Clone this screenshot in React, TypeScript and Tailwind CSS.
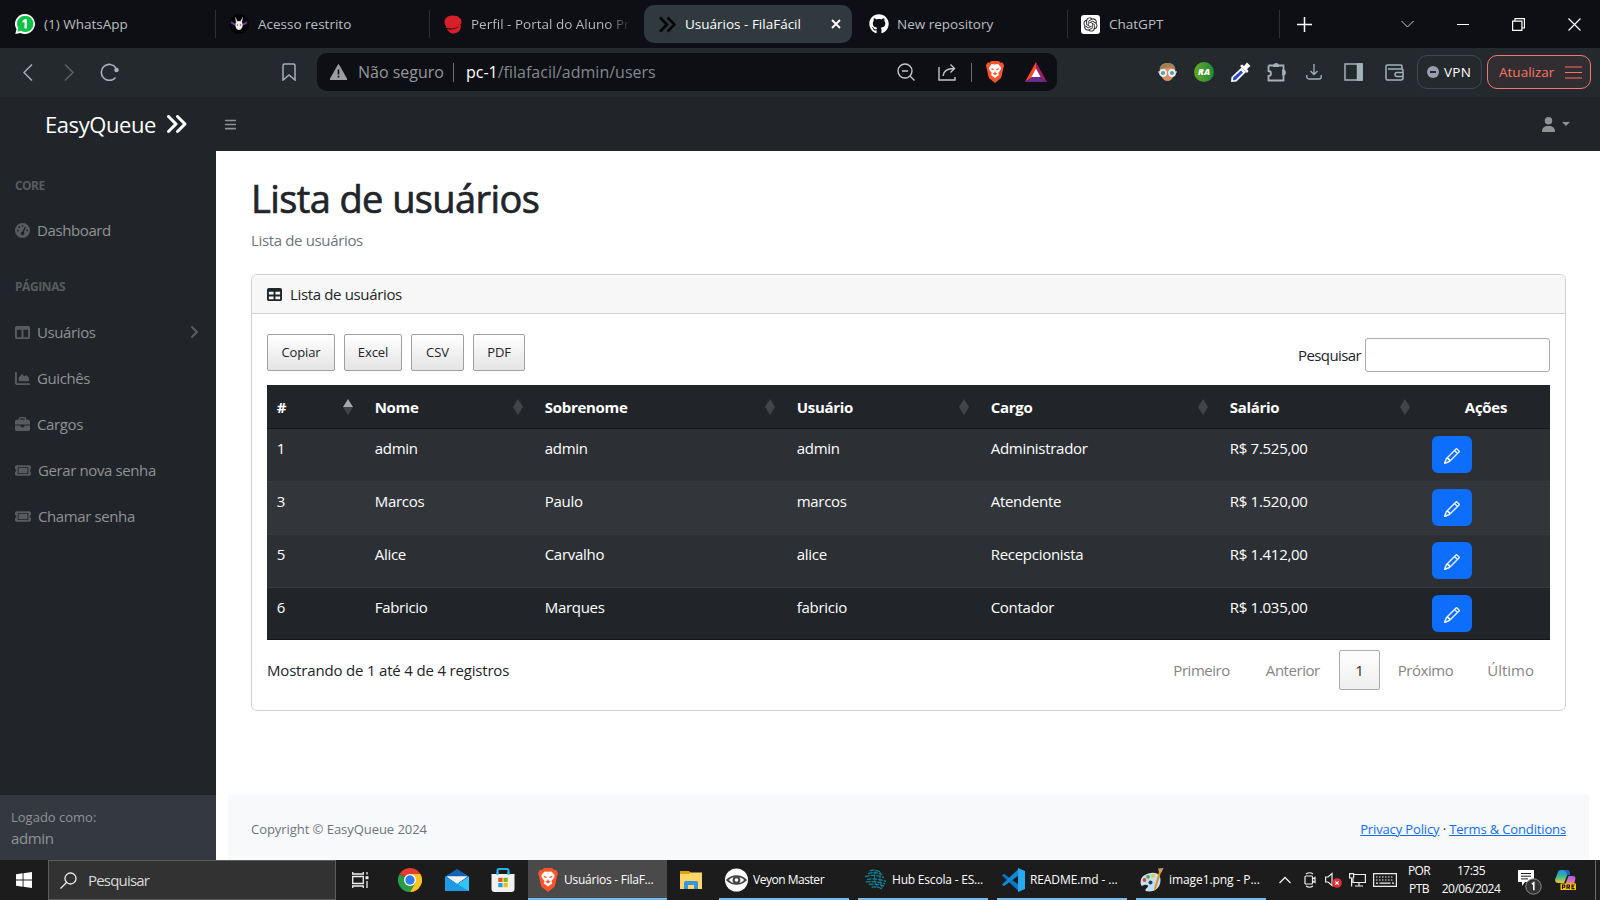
import React, { ReactNode } from 'react';
import {
  FaAngleRight, FaAnglesRight, FaBars, FaBriefcase, FaChartArea, FaGaugeHigh,
  FaGithub, FaTable, FaTableColumns, FaTicket, FaUser,
} from 'react-icons/fa6';
import { BsPencil } from 'react-icons/bs';
import { RiOpenaiFill } from 'react-icons/ri';

/* ---------- Logos ---------- */

function BraveLogo({ className }: { className: string }) {
  return (
    <svg viewBox="0 0 20 24" className={className}>
      <path d="M6 0h8l2 2 2-.3L20 5l-.9 3L17 17.500 Q16.500 19 15 20l-5 4-5-4Q3.500 19 3 17.500L.9 8 0 5l2-3.300L4 2z" fill="#fb542b" />
      <path d="M10 3.800 13.500 3.400 16.600 7l-.4 2.500-2.700 3.500 .8 2.200L10 18.500 5.700 15.200l.8-2.200L3.800 9.500 3.400 7 6.500 3.400z" fill="#fff" />
      <path d="M5.200 7.800 8.300 8.400 8.700 10 6.400 9.500zM14.800 7.800 11.700 8.400 11.300 10 13.600 9.500zM10 10.800 11 13 12.800 13.600 10 15.600 7.200 13.600 9 13z" fill="#fb542b" />
    </svg>
  );
}

function WhatsAppLogo() {
  return (
    <svg viewBox="0 0 20 20" className="size-5">
      <path d="M10 0a10 10 0 1 1-4.600 18.900L.3 20l1.200-4.800A10 10 0 0 1 10 0z" fill="#fff" />
      <circle cx="10.200" cy="9.900" r="8.200" fill="#0fc144" />
      <path d="M2.500 17.800 3.400 14l2.800 2.800z" fill="#0fc144" />
      <path d="M7.500 6.800 10.300 5h1.500v9.500H9.500V7.800l-2 1z" fill="#fff" />
    </svg>
  );
}

function RabbitLogo() {
  return (
    <svg viewBox="0 0 20 20" className="size-5">
      <circle cx="10" cy="10" r="10" fill="#000" />
      <path d="M1.500 7 6 9.500v2L2.500 10zM18.500 7 14 9.500v2L17.500 10z" fill="#7e30a8" />
      <path d="M6 2.500 8.800 7.500 7 9zM14 2.500 11.200 7.500 13 9z" fill="#e6c9d8" />
      <path d="M10 7c2.400 0 3.700 1.500 3.700 3.800S12.300 16 10 16s-3.700-2.900-3.700-5.200S7.600 7 10 7z" fill="#f0edf0" />
      <circle cx="8.500" cy="11" r=".7" fill="#555" />
      <circle cx="11.500" cy="11" r=".7" fill="#555" />
    </svg>
  );
}

function PortalLogo() {
  return (
    <svg viewBox="0 0 18 19" className="h-[19px] w-[18px]">
      <path d="M9 .5c5 0 8.500 3 8.500 6.300 0 3.200-3.500 5.700-8 5.700C4.500 12.500.5 11.500.5 7S4.500.5 9 .5z" fill="#d71f28" />
      <path d="M3 14c4 1 10.500.5 13.500-4.500 1.500 5-2.500 9-7 9-3 0-5.500-2-6.500-4.500z" fill="#d71f28" />
      <path d="M2 11.500c4 1.700 10 1.500 14-2" fill="none" stroke="#d71f28" strokeWidth="2" />
    </svg>
  );
}

function ChromeLogo() {
  return (
    <svg viewBox="0 0 24 24" className="size-6">
      <path d="M12 12 1.600 6A12 12 0 0 1 22.400 6z" fill="#e33b2e" />
      <path d="M12 12h0L1.600 6A12 12 0 0 0 12 24l5-9z" fill="#2a9d47" />
      <path d="M12 6h10.400A12 12 0 0 1 12 24l5.200-9z" fill="#fcc31e" />
      <circle cx="12" cy="12" r="6" fill="#fff" />
      <circle cx="12" cy="12" r="4.700" fill="#2f7de9" />
    </svg>
  );
}

function MailLogo() {
  return (
    <svg viewBox="0 0 24 24" className="size-6">
      <path d="M0 8.500 12 1l12 7.500V12H0z" fill="#1265b4" />
      <path d="M2 8.500h20L12 16z" fill="#f2f2f2" />
      <path d="M0 8.500 12 16 24 8.500V23H0z" fill="#35c2f5" />
      <path d="M0 8.500 24 23H0z" fill="#1e9be6" />
      <path d="M1.500 8.500h21L12 15.500z" fill="#f2f2f2" />
    </svg>
  );
}

function StoreLogo() {
  return (
    <svg viewBox="0 0 24 24" className="size-6">
      <path d="M6.500 7V2.500A1.500 1.500 0 0 1 8 1h8a1.500 1.500 0 0 1 1.500 1.500V7" fill="none" stroke="#24b3ee" strokeWidth="2" />
      <path d="M.5 6h23v15a3 3 0 0 1-3 3h-17a3 3 0 0 1-3-3z" fill="#f1f1f1" />
      <path d="M6.500 4v3M17.500 4v3" stroke="#24b3ee" strokeWidth="2" />
      <path d="M7.300 9.800h4.200V14H7.300z" fill="#f04e23" />
      <path d="M12.500 9.800h4.200V14h-4.200z" fill="#80b900" />
      <path d="M7.300 15h4.200v4.200H7.300z" fill="#1ba0ee" />
      <path d="M12.500 15h4.200v4.200h-4.200z" fill="#ffb800" />
    </svg>
  );
}

function FolderLogo() {
  return (
    <svg viewBox="0 0 22 18" className="h-[18px] w-[22px]">
      <path d="M0 0h9l2 2h10v4H0z" fill="#e3a008" />
      <path d="M0 3h9l1.500-1.500H22V18H0z" fill="#ffd667" />
      <path d="M4 18v-6.500a1.500 1.500 0 0 1 1.500-1.500h11a1.500 1.500 0 0 1 1.500 1.500V18h-4v-4H8v4z" fill="#3a94dc" />
    </svg>
  );
}

function VeyonLogo() {
  return (
    <svg viewBox="0 0 24 24" className="h-[24px] w-[23px]">
      <circle cx="12" cy="12" r="12" fill="#fff" />
      <path d="M1 12c5-6.500 17-6.500 22 0-5 6.500-17 6.500-22 0z" fill="#444" />
      <path d="M4 12c2-2 4-3 5-3-1.500 1.500-1.500 4.500 0 6-1 0-3-1-5-3zM20 12c-2-2-4-3-5-3 1.500 1.500 1.500 4.500 0 6 1 0 3-1 5-3z" fill="#fff" />
      <circle cx="12" cy="12" r="1.900" fill="#fff" />
    </svg>
  );
}

function HubLogo() {
  return (
    <svg viewBox="0 0 24 22" className="h-[21px] w-[23px]" fill="none" stroke="#11869c" strokeWidth="1.300">
      <path d="M6 2q5-2 11 1M4 5q7-3 15 1M1 8q9-3 20 1M3 11q9-2 20 2M2 13.500q10-1 20 2M5 16q8-1 16 2M8 19q6-1 11 2" strokeDasharray="5 1" />
      <path d="M12 2q-3 8 2 17M17 3q-2 9 2 17" strokeWidth=".8" />
    </svg>
  );
}

function VsCodeLogo() {
  return (
    <svg viewBox="0 0 24 24" className="size-6">
      <path d="M1 7.500 3 5.800 18 17v6.500z" fill="#0a78c2" />
      <path d="M1 16.500 3 18.200 18 7V.5z" fill="#1089d8" />
      <path d="M17 0 24 3v18l-7 3z" fill="#27a9f2" />
    </svg>
  );
}

function PaintLogo() {
  return (
    <svg viewBox="0 0 24 24" className="size-6">
      <path d="M11 5c6-1 10 2 9.500 8S16 23.500 9 23.500 7 20 8 18.500 5 16 3 17.500 0 15 1 11.500 6 5.800 11 5z" fill="#c3e0f2" />
      <circle cx="4.500" cy="12" r="1.900" fill="#e0492f" />
      <circle cx="8" cy="8.800" r="1.900" fill="#4cab3c" />
      <circle cx="13" cy="7.800" r="1.900" fill="#f3c02f" />
      <circle cx="10.500" cy="14.500" r="2" fill="#1d4464" />
      <path d="M19.500 2 21.500 3 16 20.500 14.500 23l-.3-3z" fill="#ea8d23" />
      <path d="M18 .5 23.500 0 21.500 4.500 19 4z" fill="#c99a63" />
    </svg>
  );
}

function CopilotLogo() {
  return (
    <svg viewBox="0 0 21 20" className="h-5 w-[21px]">
      <defs>
        <linearGradient id="cop-left" x1="0" y1="0" x2="0" y2="1">
          <stop offset="0" stopColor="#1e8fe8" />
          <stop offset=".5" stopColor="#35b98e" />
          <stop offset="1" stopColor="#e8c93a" />
        </linearGradient>
        <linearGradient id="cop-right" x1="0" y1="0" x2="0" y2="1">
          <stop offset="0" stopColor="#a65be6" />
          <stop offset="1" stopColor="#f58a7a" />
        </linearGradient>
      </defs>
      <path d="M5.500 0h7c1.500 0 2 1.500 2.500 4.500h-2.500L9 13H3.500C.5 13-.3 11 .3 9L3 2Q3.500 0 5.500 0z" fill="url(#cop-left)" />
      <path d="M9 0h3.500c1.500 0 2 1.500 2.500 4.500l-3 .5Q11.500 1.500 9 0z" fill="#2459cc" />
      <path d="M13.500 6H18q3 .3 2.300 3L19 15H10z" fill="url(#cop-right)" />
      <path d="M5.500 13.500H21V20H5.500z" fill="#ffc400" />
      <path d="M7.500 19v-4h2.200v2.200H7.500M12 19v-4h2.500v2H12M14.500 19l-1.300-2M19.500 15H17v3.600h2.500M17 16.800h2" fill="none" stroke="#111" strokeWidth="1.100" />
    </svg>
  );
}

/* ---------- Browser chrome ---------- */

function Tab({ width, icon, label, gap }: { width: string; icon: ReactNode; label: string; gap: string }) {
  return (
    <div className={`flex h-7 items-center border-r border-[#2c2f33] ${width}`}>
      <div className={`flex shrink-0 items-center ${gap}`}>
        {icon}
        <span className="pt-px text-[13.500px] whitespace-nowrap text-[#bcbec0]">{label}</span>
      </div>
    </div>
  );
}

function TabBar() {
  return (
    <div className="flex h-12 shrink-0 items-center bg-[#0e0f14]">
      <Tab width="w-[216px] pl-[15px]" gap="gap-[9px]" icon={<WhatsAppLogo />} label="(1) WhatsApp" />
      <Tab width="w-[214px] pl-[13px]" gap="gap-[9px]" icon={<RabbitLogo />} label="Acesso restrito" />
      <div className="flex h-7 w-[214px] items-center pl-[14px]">
        <PortalLogo />
        <span className="ml-[9px] w-[160px] overflow-hidden bg-linear-to-r from-[#bcbec0] from-85% to-transparent bg-clip-text pt-px text-[13.500px] whitespace-nowrap text-transparent">
          Perfil - Portal do Aluno Pr
        </span>
      </div>
      <div className="flex h-[38px] w-[208px] items-center rounded-[10px] bg-[#30393e] pl-[15px]">
        <svg viewBox="0 0 17 17" className="size-[17px]" fill="none" stroke="#050607" strokeWidth="2.600">
          <path d="M1 1.500 8 8.500 1 15.500M8.500 1.500l7 7-7 7" />
        </svg>
        <span className="ml-[9px] w-[118px] pt-px text-[13.500px] whitespace-nowrap text-white">Usuários - FilaFácil</span>
        <svg viewBox="0 0 10 10" className="ml-[28px] size-[10px]" stroke="#fff" strokeWidth="1.800">
          <path d="M1 1 9 9M9 1 1 9" />
        </svg>
      </div>
      <Tab width="w-[216px] pl-[17px]" gap="gap-[8px]" icon={<FaGithub className="size-5 text-white" />} label="New repository" />
      <Tab
        width="w-[212px] pl-[13px]"
        gap="gap-[9px]"
        icon={<span className="flex size-[19px] items-center justify-center rounded-[3px] bg-white"><RiOpenaiFill className="size-[17px] text-[#222]" /></span>}
        label="ChatGPT"
      />
      <svg viewBox="0 0 15 15" className="ml-[17px] size-[15px]" stroke="#fff" strokeWidth="1.500"><path d="M7.500 0v15M0 7.500h15" /></svg>
      <svg viewBox="0 0 13 8" className="ml-[89px] h-2 w-[13px]" fill="none" stroke="#ccc" strokeWidth="1"><path d="M.5 1 6.500 7l6-6" /></svg>
      <svg viewBox="0 0 12 12" className="ml-[43px] size-3" stroke="#fff" strokeWidth="1"><path d="M0 6.500h12" /></svg>
      <svg viewBox="0 0 13 13" className="ml-[43px] size-[13px]" fill="none" stroke="#fff" strokeWidth="1.200"><path d="M.6 3.100h9.300v9.300H.6zM3 3V.6h9.400V10H10" /></svg>
      <svg viewBox="0 0 13 13" className="ml-[43px] size-[13px]" stroke="#fff" strokeWidth="1.200"><path d="M.5.5l12 12M12.500.5l-12 12" /></svg>
    </div>
  );
}

function Toolbar() {
  const line = { fill: 'none', stroke: '#a3b2b8', strokeWidth: 1.5 };
  return (
    <div className="flex h-[49px] shrink-0 items-center bg-[#23292d] pb-px pl-[23px]">
      <svg viewBox="0 0 10 17" className="h-[17px] w-[10px]" {...line}><path d="M9 .5 1 8.500l8 8" /></svg>
      <svg viewBox="0 0 10 17" className="ml-[31px] h-[17px] w-[10px]" {...line} stroke="#5b6367"><path d="M1 .5l8 8-8 8" /></svg>
      <svg viewBox="0 0 20 18" className="ml-[26px] h-[18px] w-[20px]" {...line} strokeWidth="1.600">
        <path d="M15.500 14.500A8 8 0 1 1 16 5" />
        <circle cx="16.500" cy="7" r="2.300" fill="#a3b2b8" stroke="none" />
      </svg>
      <svg viewBox="0 0 14 18" className="ml-[162px] h-[18px] w-[14px]" {...line}><path d="M1 17V2.500A1.500 1.500 0 0 1 2.500 1h9A1.500 1.500 0 0 1 13 2.500V17l-6-5z" /></svg>
      <div className="ml-[21px] flex h-[38px] w-[740px] items-center rounded-[10px] bg-[#0e0f14] pl-[13px]">
        <svg viewBox="0 0 17 16" className="h-4 w-[17px]">
          <path d="M8.500.5 17 15.500H0z" fill="#9b9da0" stroke="#9b9da0" strokeLinejoin="round" />
          <path d="M8.500 5.500v5M8.500 11.800v1.700" stroke="#0e0f14" strokeWidth="1.600" />
        </svg>
        <span className="ml-[11px] text-[16px] whitespace-nowrap text-[#95989b]">Não seguro</span>
        <span className="ml-[9px] h-[19px] w-px bg-[#6a6c70]" />
        <span className="ml-[12px] text-[16px] whitespace-nowrap text-[#84878b]"><span className="text-white">pc-1</span>/filafacil/admin/users</span>
        <svg viewBox="0 0 18 18" className="ml-auto size-[18px]" fill="none" stroke="#c3c5c7" strokeWidth="1.400"><circle cx="8" cy="8" r="7" /><path d="M5 8h6M13 13l4.500 4.500" /></svg>
        <svg viewBox="0 0 18 18" className="ml-[23px] size-[18px]" fill="none" stroke="#c3c5c7" strokeWidth="1.400"><path d="M1 4v13h16v-3M5 13c.5-5 4-7.500 11-7.500M12.500 1.500l4 4-4 4" /></svg>
        <span className="ml-[15px] h-[19px] w-px bg-[#6a6c70]" />
        <BraveLogo className="ml-[13px] h-[22px] w-[20px]" />
        <svg viewBox="0 0 22 20" className="mr-[10px] ml-[20px] h-5 w-[22px]">
          <path d="M11 0 0 20l11-7z" fill="#ff4724" />
          <path d="M11 0l11 20-11-7z" fill="#9e1f63" />
          <path d="M0 20h22l-11-7z" fill="#662d91" />
          <path d="M11 6.500 15.500 15h-9z" fill="#fff" />
        </svg>
      </div>
      <svg viewBox="0 0 19 18" className="ml-[101px] h-[18px] w-[19px]">
        <path d="M2 7Q2 0 9.500 0T17 7l-1 5q-2 6-6.500 6T3 12z" fill="#d98f66" />
        <path d="M1.500 7Q2 0 9.500 0T17.500 7L13 4.500 7 5z" fill="#a08258" />
        <circle cx="5" cy="10" r="3" fill="#5f9aa5" stroke="#e8f2f4" strokeWidth="1.800" />
        <circle cx="14" cy="10" r="3" fill="#5f9aa5" stroke="#e8f2f4" strokeWidth="1.800" />
        <path d="M0 9h1.500M17.500 9H19" stroke="#e8f2f4" />
      </svg>
      <span className="ml-[17px] flex size-5 items-center justify-center rounded-full bg-linear-to-r from-[#63a818] to-[#128a3c] text-[9px] font-extrabold text-white italic">RA</span>
      <svg viewBox="0 0 20 20" className="ml-[17px] size-5">
        <path d="M10.500 5.500 15 10 5.500 19.500 0 20 .5 15z" fill="#fff" />
        <path d="M10 8.500 12 10.500 4.500 18l-2.500.3L2.300 15.500z" fill="#2b49c8" />
        <path d="M9 4l2-1.500 2 1.500 3-3.500 3.500 3.500L16 7l1.500 2-1.500 2z" fill="#fff" />
      </svg>
      <svg viewBox="0 0 20 20" className="ml-[16px] size-5" {...line} strokeWidth="1.800">
        <path d="M1.500 3.500H7.500M11 3.500h5.500v5M16.500 12.500v6H1.500V14a2.300 2.300 0 0 0 0-5V3.500" />
        <path d="M7 4a2 2 0 0 1 4 0zM16 8.500a2 2 0 0 1 0 4z" fill="#a3b2b8" />
      </svg>
      <svg viewBox="0 0 16 16" className="ml-[19px] size-4" {...line} strokeWidth="1.300"><path d="M8 0v10.500M4.500 7 8 10.500 11.500 7M.8 11v2a2 2 0 0 0 2 2h10.400a2 2 0 0 0 2-2v-2" /></svg>
      <svg viewBox="0 0 19 18" className="ml-[22px] h-[18px] w-[19px]" {...line}><path d="M1 1h17v16H1z" /><path d="M13.500 1H18v16h-4.500z" fill="#a3b2b8" /></svg>
      <svg viewBox="0 0 19 17" className="ml-[22px] h-[17px] w-[19px]" {...line}>
        <path d="M17 5V2.500A1.500 1.500 0 0 0 15.500 1h-13A1.500 1.500 0 0 0 1 2.500v12A1.500 1.500 0 0 0 2.500 16H16a2 2 0 0 0 2-2V6.500A1.500 1.500 0 0 0 16.500 5H3M18 8.500h-6a2 2 0 0 0 0 4h6" />
      </svg>
      <div className="ml-[13px] flex h-[34px] w-[65px] items-center rounded-[10px] border border-[#3d494d] pl-[9px]">
        <span className="flex size-3 items-center justify-center rounded-full bg-[#9c9cb4]"><span className="h-[2px] w-[6px] bg-[#23292d]" /></span>
        <span className="ml-[5px] text-[13.500px] tracking-[0.3px] text-white">VPN</span>
      </div>
      <div className="ml-[5px] flex h-[34px] w-[104px] items-center rounded-[10px] border border-[#ea7d70] bg-[#322d30] pl-[11px] text-[#fa7565]">
        <span className="text-[13.500px]">Atualizar</span>
        <svg viewBox="0 0 17 13" className="ml-[11px] h-[13px] w-[17px]" stroke="#fa7565" strokeWidth="1.200"><path d="M0 1h17M0 6.500h17M0 12h17" /></svg>
      </div>
    </div>
  );
}

/* ---------- Application ---------- */

function Navbar() {
  return (
    <div className="flex h-[54px] shrink-0 items-center bg-[#212529] pl-[45px]">
      <span className="text-[22px] tracking-[-0.42px] text-white">EasyQueue</span>
      <FaAnglesRight className="ml-[8px] size-6 text-white" />
      <FaBars className="mt-px ml-[36px] size-[13px] text-[#909294]" />
      <FaUser className="mr-[6px] ml-auto size-[15px] text-[#909294]" />
      <span className="mr-[30px] border-x-[4px] border-t-[4px] border-x-transparent border-t-[#909294]" />
    </div>
  );
}

const LINKS: { icon: ReactNode; label: string; more?: boolean }[] = [
  { icon: <FaTableColumns />, label: 'Usuários', more: true },
  { icon: <FaChartArea />, label: 'Guichês' },
  { icon: <FaBriefcase />, label: 'Cargos' },
  { icon: <FaTicket className="w-4" />, label: 'Gerar nova senha' },
  { icon: <FaTicket className="w-4" />, label: 'Chamar senha' },
];

function NavLink({ icon, label, more }: { icon: ReactNode; label: string; more?: boolean }) {
  return (
    <div className="flex h-[46px] items-center pr-[14px] pl-[15px]">
      <span className="text-[15px] text-[#595c5f]">{icon}</span>
      <span className="ml-[7px] text-[15px] tracking-[-0.39px] text-[#909294]">{label}</span>
      {more && <FaAngleRight className="ml-auto size-4 text-[#595c5f]" />}
    </div>
  );
}

function Sidebar() {
  return (
    <div className="flex w-[216px] shrink-0 flex-col bg-[#212529]">
      <div className="mt-[27px] h-4 pl-[15px] text-[12px] leading-4 font-bold tracking-[-0.580px] text-[#595c5f]">CORE</div>
      <div className="mt-[13px]"><NavLink icon={<FaGaugeHigh />} label="Dashboard" /></div>
      <div className="mt-[26px] h-4 pl-[15px] text-[12px] leading-4 font-bold tracking-[-0.420px] text-[#595c5f]">PÁGINAS</div>
      <div className="mt-[14px]">
        {LINKS.map((l) => <NavLink key={l.label} {...l} />)}
      </div>
      <div className="mt-auto flex h-[65px] flex-col bg-[#343941] pt-[12px] pl-[11px] text-[#909396]">
        <span className="text-[13px] leading-[20px]">Logado como:</span>
        <span className="text-[15px] leading-[22px] tracking-[-0.35px]">admin</span>
      </div>
    </div>
  );
}

const GRID = 'grid grid-cols-[98px_170px_252px_194px_239px_202px_128px]';
const HEADS = ['#', 'Nome', 'Sobrenome', 'Usuário', 'Cargo', 'Salário'];
const ROWS = [
  { bg: 'bg-[#2c3034]', cells: ['1', 'admin', 'admin', 'admin', 'Administrador', 'R$ 7.525,00'] },
  { bg: 'bg-[#323539]', cells: ['3', 'Marcos', 'Paulo', 'marcos', 'Atendente', 'R$ 1.520,00'] },
  { bg: 'bg-[#2c3034]', cells: ['5', 'Alice', 'Carvalho', 'alice', 'Recepcionista', 'R$ 1.412,00'] },
  { bg: 'bg-[#212529]', cells: ['6', 'Fabricio', 'Marques', 'fabricio', 'Contador', 'R$ 1.035,00'] },
];

function SortMark({ active }: { active: boolean }) {
  return (
    <svg viewBox="0 0 10 16" className="mb-px h-4 w-[10px]">
      <path d="M5 0l5 8H0z" fill={active ? '#a6a8a9' : '#414547'} />
      <path d="M5 16l5-8H0z" fill="#414547" />
    </svg>
  );
}

function UsersTable() {
  return (
    <div className="mt-[14px] text-[15px] text-white">
      <div className={`${GRID} h-[44px] border-b border-[#15181a] bg-[#212529] pt-[2px] font-bold`}>
        {HEADS.map((h, i) => (
          <div key={h} className="flex items-center justify-between pr-[12.500px] pl-[9.700px] tracking-[-0.28px]">
            {h}
            <SortMark active={i === 0} />
          </div>
        ))}
        <div className="flex items-center justify-center tracking-[-0.28px]">Ações</div>
      </div>
      {ROWS.map((r) => (
        <div key={r.cells[0]} className={`${GRID} h-[53px] border-b border-[#373b3e] last:h-[52px] last:border-[#15181a] ${r.bg}`}>
          {r.cells.map((c, i) => (
            <div key={i} className="pt-[8px] pl-[9.700px] leading-[23px] tracking-[-0.28px]">{c}</div>
          ))}
          <div className="pt-[7px] pl-[10px]">
            <div className="flex h-[37px] w-[40px] items-center justify-center rounded-[6px] bg-[#0d6efd]">
              <BsPencil className="mt-[2px] size-4" strokeWidth={0.4} />
            </div>
          </div>
        </div>
      ))}
    </div>
  );
}

function ExportButton({ label, width }: { label: string; width: string }) {
  return (
    <div className={`flex h-[37px] items-center justify-center rounded-[2px] border border-[#a0a0a0] bg-linear-to-b from-white to-[#e4e4e4] pt-px text-[13px] tracking-[-0.1px] text-[#212529] ${width}`}>
      {label}
    </div>
  );
}

function Main() {
  return (
    <div className="flex min-w-0 flex-1 flex-col bg-white text-[#212529]">
      <div className="pr-[34px] pl-[35px]">
        <h1 className="mt-[22px] text-[38px] leading-[50px] font-medium tracking-[-0.6px] [-webkit-text-stroke:0.7px_#212529]">Lista de usuários</h1>
        <div className="mt-[6px] text-[15px] leading-[23px] tracking-[-0.35px] text-[#6c757d]">Lista de usuários</div>
        <div className="mt-[22px] h-[437px] rounded-[6px] border border-[#d0d0d0]">
          <div className="flex h-[39px] items-center rounded-t-[5px] border-b border-[#d0d0d0] bg-[#f7f7f7] pl-[15px]">
            <FaTable className="size-[15px]" />
            <span className="ml-[8px] text-[15px] tracking-[-0.35px]">Lista de usuários</span>
          </div>
          <div className="px-[15px]">
            <div className="flex h-[57px] items-end">
              <div className="flex gap-[9px]">
                <ExportButton label="Copiar" width="w-[68px]" />
                <ExportButton label="Excel" width="w-[58px]" />
                <ExportButton label="CSV" width="w-[53px]" />
                <ExportButton label="PDF" width="w-[52px]" />
              </div>
              <div className="mb-[-1px] ml-auto flex items-center">
                <span className="text-[15px] tracking-[-0.6px]">Pesquisar</span>
                <input className="ml-[4px] h-[34px] w-[185px] rounded-[3px] border border-[#aaa] bg-white outline-none" />
              </div>
            </div>
            <UsersTable />
            <div className="flex h-[60px] items-center text-[15px]">
              <span className="tracking-[-0.18px]">Mostrando de 1 até 4 de 4 registros</span>
              <div className="ml-auto flex items-center pr-[16px] tracking-[-0.46px] text-[#858585]">
                <span>Primeiro</span>
                <span className="ml-[36px]">Anterior</span>
                <span className="ml-[19px] flex h-10 w-[41px] items-center justify-center rounded-[2px] border border-[#aaa] bg-linear-to-b from-white to-[#eee] text-[#333]">1</span>
                <span className="ml-[18px]">Próximo</span>
                <span className="ml-[34px] tracking-normal">Último</span>
              </div>
            </div>
          </div>
        </div>
      </div>
      <div className="mt-auto mr-[11px] ml-[12px] flex h-[65px] items-center justify-between bg-[#f8f9fb] pt-[4px] pr-[23px] pl-[23px] text-[13px]">
        <span className="tracking-[-0.05px] text-[#6c757d]">Copyright © EasyQueue 2024</span>
        <span className="tracking-[-0.14px]">
          <span className="text-[#0d6efd] underline">Privacy Policy</span> · <span className="text-[#0d6efd] underline">Terms &amp; Conditions</span>
        </span>
      </div>
    </div>
  );
}

/* ---------- Desktop taskbar ---------- */

function Task({ icon, label, className }: { icon: ReactNode; label: string; className: string }) {
  return (
    <div className={`flex h-10 items-center border-b-2 border-[#76b9ed] pt-[1px] ${className}`}>
      {icon}
      <span className="ml-[5px] text-[12px] whitespace-nowrap text-white">{label}</span>
    </div>
  );
}

function Taskbar() {
  return (
    <div className="flex h-10 shrink-0 items-center bg-[#1c1c1c] text-white">
      <svg viewBox="0 0 16 16" className="ml-4 size-4" fill="#fff"><path d="M0 2.200 6.600 1.300v6.300H0zM7.500 1.200 16 0v7.600H7.500zM0 8.400h6.600v6.300L0 13.800zM7.500 8.400H16V16l-8.500-1.200z" /></svg>
      <div className="ml-4 flex h-10 w-72 items-center border border-[#5c5c5c] bg-[#323232] pl-[11px]">
        <svg viewBox="0 0 17 17" className="size-[17px]" fill="none" stroke="#eee" strokeWidth="1.300"><circle cx="10.500" cy="6.500" r="5.500" /><path d="M6.500 10.500.5 16.500" /></svg>
        <span className="ml-[11px] text-[15px] tracking-[-0.8px] text-[#dadada]">Pesquisar</span>
      </div>
      <svg viewBox="0 0 17 16" className="ml-4 h-4 w-[17px]" fill="none" stroke="#eee" strokeWidth="1.300">
        <path d="M.7 4.500h10.600v7H.7zM.7 0v2h10.600V0M.7 16v-2h10.600v2M15 0v2.500M15 9v7" />
        <path d="M13.500 4.200h3v3h-3z" fill="#eee" stroke="none" />
      </svg>
      <div className="ml-[29px]"><ChromeLogo /></div>
      <div className="ml-[23px]"><MailLogo /></div>
      <div className="ml-[22px]"><StoreLogo /></div>
      <Task className="ml-[13px] w-[139px] bg-[#4a4a4a] pl-[10px] tracking-[-0.25px]" icon={<BraveLogo className="mr-px h-[24px] w-[20px]" />} label="Usuários - FilaF..." />
      <div className="ml-[13px]"><FolderLogo /></div>
      <Task className="ml-[17px] w-[130px] pl-[6px] tracking-[-0.47px]" icon={<VeyonLogo />} label="Veyon Master" />
      <Task className="ml-[9px] w-[130px] pl-[6px] tracking-[-0.2px]" icon={<HubLogo />} label="Hub Escola - ES..." />
      <Task className="ml-[9px] w-[130px] pl-[4px] tracking-[-0.1px]" icon={<VsCodeLogo />} label="README.md - ..." />
      <Task className="ml-[9px] w-[130px] pl-[4px] tracking-[-0.08px]" icon={<PaintLogo />} label="image1.png - P..." />
      <svg viewBox="0 0 12 8" className="ml-[13px] h-2 w-3" fill="none" stroke="#eee" strokeWidth="1.300"><path d="M.5 7 6 1.500 11.500 7" /></svg>
      <svg viewBox="0 0 12 16" className="ml-[13px] h-4 w-3" fill="none" stroke="#eee" strokeWidth="1.200">
        <path d="M2 2q3.500-2.500 7 0M2 14q3.500 2.500 7 0" />
        <path d="M2 4h5.500Q8.500 4 8.500 5v6q0 1-1 1H2Q1 12 1 11V5q0-1 1-1zM8.500 7l2.500-1.500v5L8.500 9" />
      </svg>
      <svg viewBox="0 0 17 16" className="ml-[9px] h-4 w-[17px]" fill="none">
        <path d="M.6 5H3l4-3.500v12L3 10H.6z" stroke="#eee" strokeWidth="1.200" />
        <circle cx="12" cy="11" r="4.800" fill="#e02d37" />
        <path d="M10.300 9.300l3.400 3.400M13.700 9.300l-3.400 3.400" stroke="#fff" strokeWidth="1.200" />
      </svg>
      <svg viewBox="0 0 17 14" className="ml-[7px] h-[14px] w-[17px]" fill="none" stroke="#eee" strokeWidth="1.200">
        <path d="M5 1.500h11.400v8H4V6M10 9.500V13M6 13h8M.6.600h4V5h-4zM2.600 5v8.400" />
      </svg>
      <svg viewBox="0 0 24 14" className="ml-[7px] h-[14px] w-6" fill="none" stroke="#eee" strokeWidth="1.200">
        <path d="M.6.600h22.800v12.800H.6z" />
        <path d="M3 4h18M3 7h18" strokeDasharray="1.500 1.500" />
        <path d="M3 10.200h2M6.500 10.200h11M19 10.200h2" />
      </svg>
      <div className="ml-[10px] flex w-[24px] flex-col items-center pb-px text-[12px] leading-[18px] tracking-[-0.6px]"><span>POR</span><span>PTB</span></div>
      <div className="ml-[10px] flex w-[60px] flex-col items-center pb-px text-[12px] leading-[18px] tracking-[-0.52px]"><span>17:35</span><span>20/06/2024</span></div>
      <svg viewBox="0 0 25 25" className="mt-[5px] ml-[16px] size-[25px]">
        <path d="M1 0h16v12H8l-3 4v-4H1z" fill="#fff" />
        <path d="M4 3.500h10M4 6.200h10M4 8.900h7" stroke="#1c1c1c" />
        <circle cx="16.500" cy="16.500" r="7.700" fill="#333" stroke="#8f8f8f" />
        <path d="M14.800 14.200 16.800 12.800v7.400" fill="none" stroke="#fff" strokeWidth="1.600" />
      </svg>
      <div className="ml-[13px]"><CopilotLogo /></div>
      <span className="mr-1 ml-auto h-10 w-px bg-[#6a6a6a]" />
    </div>
  );
}

export default function App() {
  return (
    <div className="flex h-[900px] w-[1600px] flex-col overflow-hidden font-['Open_Sans','Noto_Sans',sans-serif]">
      <TabBar />
      <Toolbar />
      <Navbar />
      <div className="flex min-h-0 flex-1">
        <Sidebar />
        <Main />
      </div>
      <Taskbar />
    </div>
  );
}
